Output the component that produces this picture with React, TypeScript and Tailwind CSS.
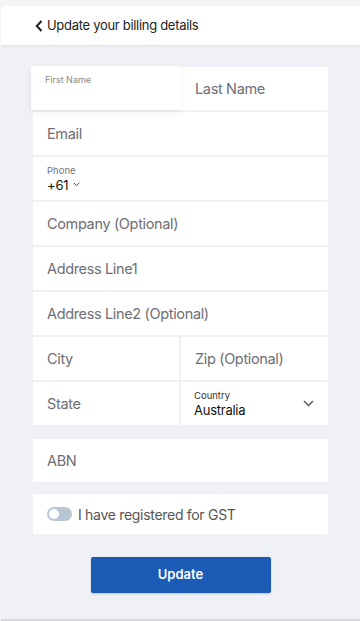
import React from "react";

function Cell({ children, className = "" }: { children: React.ReactNode; className?: string }) {
  return (
    <div className={`flex h-[43px] items-center bg-white px-[14px] ${className}`}>
      {children}
    </div>
  );
}

function Placeholder({ text }: { text: string }) {
  return <span className="text-[14.5px] tracking-[-0.35px] text-[#6e6e73]">{text}</span>;
}

export default function App() {
  return (
    <div className="h-[621px] w-[360px] bg-[#f4f4f6] pt-[6px] pl-[1px] font-['Inter',sans-serif]">
      <div className="flex h-[613px] flex-col overflow-hidden rounded-tl-[4px] bg-[#f0f1f6]">
        <div className="flex h-[39px] shrink-0 items-center gap-[4px] bg-white pl-[34px] shadow-[0_1px_2px_rgba(0,0,0,0.08)]">
          <svg width="8" height="12" viewBox="0 0 8 12" fill="none">
            <path d="M6.5 1 L1.8 6 L6.5 11" stroke="#222" strokeWidth="2" />
          </svg>
          <span className="text-[13px] tracking-[-0.3px] text-[#222]">Update your billing details</span>
        </div>

        <div className="mt-[22px] flex flex-col gap-[2px] px-[32px]">
          <div className="flex gap-0">
            <div className="relative z-10 -ml-[2px] -mt-[1px] flex h-[44px] w-[150px] flex-col bg-white px-[14px] pt-[7px] shadow-[0_2px_6px_rgba(0,0,0,0.08)]">
              <span className="text-[9px] text-[#888]">First Name</span>
            </div>
            <Cell className="flex-1">
              <Placeholder text="Last Name" />
            </Cell>
          </div>
          <Cell>
            <Placeholder text="Email" />
          </Cell>
          <div className="flex h-[43px] flex-col justify-center bg-white px-[14px]">
            <span className="text-[9.5px] leading-[12px] text-[#777]">Phone</span>
            <div className="flex items-center gap-[5px]">
              <span className="text-[13px] leading-[16px] tracking-[-0.2px] text-[#111]">+61</span>
              <svg width="7" height="5" viewBox="0 0 7 5" fill="none">
                <path d="M0.8 0.8 L3.5 3.8 L6.2 0.8" stroke="#555" strokeWidth="1" />
              </svg>
            </div>
          </div>
          <Cell>
            <Placeholder text="Company (Optional)" />
          </Cell>
          <Cell>
            <Placeholder text="Address Line1" />
          </Cell>
          <Cell>
            <Placeholder text="Address Line2 (Optional)" />
          </Cell>
          <div className="flex gap-[2px]">
            <Cell className="w-[146px]">
              <Placeholder text="City" />
            </Cell>
            <Cell className="flex-1">
              <Placeholder text="Zip (Optional)" />
            </Cell>
          </div>
          <div className="flex gap-[2px]">
            <Cell className="w-[146px]">
              <Placeholder text="State" />
            </Cell>
            <div className="flex h-[43px] flex-1 items-center justify-between bg-white pl-[13px] pr-[14px]">
              <div className="flex flex-col">
                <span className="text-[9.5px] leading-[12px] text-[#333]">Country</span>
                <span className="text-[13px] leading-[16px] tracking-[-0.25px] text-[#111]">Australia</span>
              </div>
              <svg width="11" height="7" viewBox="0 0 11 7" fill="none">
                <path d="M1 1 L5.5 5.5 L10 1" stroke="#666" strokeWidth="1.6" />
              </svg>
            </div>
          </div>

          <Cell className="mt-[12px]">
            <Placeholder text="ABN" />
          </Cell>

          <div className="mt-[10px] flex h-[40px] items-center gap-[6px] bg-white px-[14px]">
            <div className="flex h-[14px] w-[25px] items-center rounded-full bg-[#b9c6d6] px-[2px]">
              <div className="h-[10px] w-[10px] rounded-full bg-white" />
            </div>
            <span className="text-[14px] tracking-[-0.3px] text-[#555]">I have registered for GST</span>
          </div>

          <div className="mt-[21px] flex justify-center">
            <button className="h-[36px] w-[180px] rounded-[2px] bg-[#1b5ab5] text-[13px] font-semibold text-white shadow-[0_1px_2px_rgba(0,0,0,0.2)]">
              Update
            </button>
          </div>
        </div>
      </div>
      <div className="h-[2px] bg-[#d9d9dc]" />
    </div>
  );
}
